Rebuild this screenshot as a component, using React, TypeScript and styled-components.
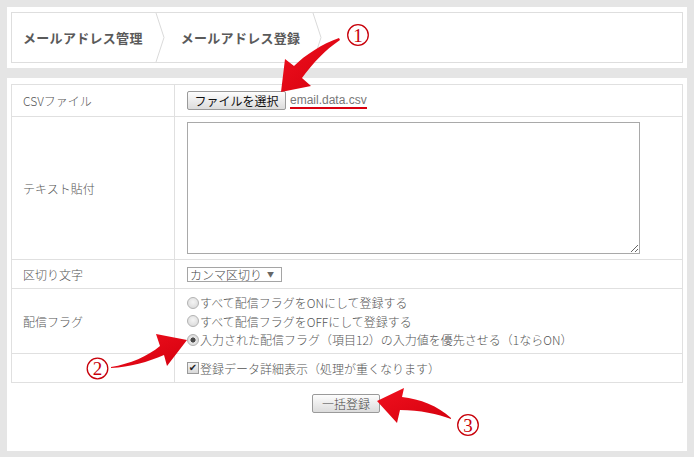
import React from 'react';
import styled, { createGlobalStyle } from 'styled-components';

const Global = createGlobalStyle`
  html, body { margin: 0; padding: 0; background: #e5e5e5; }
  body { font-family: "Noto Sans CJK JP", "Liberation Sans", sans-serif; }
  * { box-sizing: border-box; }
`;

const Page = styled.div`
  position: relative;
  width: 694px;
  height: 457px;
  padding: 7px 7px 0 7px;
  display: flex;
  flex-direction: column;
  gap: 10px;
  overflow: hidden;
`;

const HeaderPanel = styled.div`
  background: #fff;
  padding: 5px 4px;
`;

const Breadcrumb = styled.nav`
  display: flex;
  height: 51px;
  border: 1px solid #dedede;
`;

const Crumb = styled.div<{ $first?: boolean }>`
  display: flex;
  align-items: center;
  padding: 0 12px 0 ${(p) => (p.$first ? '11px' : '16px')};
  font-size: 13px;
  font-weight: 700;
  letter-spacing: 0.3px;
  color: #5a5a5a;
`;

const Chevron = styled.svg`
  flex: none;
  display: block;
`;

const MainPanel = styled.div`
  background: #fff;
  padding: 6px 4px 38px 4px;
  display: flex;
  flex-direction: column;
  gap: 11px;
`;

const Table = styled.table`
  width: 100%;
  border-collapse: collapse;
  border: 1px solid #e0e0e0;
`;

const LabelCell = styled.td<{ $h: number }>`
  width: 163px;
  height: ${(p) => p.$h}px;
  padding: 0 11px;
  border: 1px solid #e0e0e0;
  font-size: 12px;
  font-weight: 300;
  color: #555;
  vertical-align: middle;
`;

const ValueCell = styled.td<{ $top?: boolean }>`
  padding: ${(p) => (p.$top ? '5px 12px 4px' : '0 12px')};
  border: 1px solid #e0e0e0;
  font-size: 12px;
  font-weight: 300;
  color: #555;
  vertical-align: ${(p) => (p.$top ? 'top' : 'middle')};
`;

const InlineRow = styled.div`
  display: flex;
  align-items: center;
  gap: 4px;
`;

const GrayButton = styled.button<{ $w: number; $dark?: boolean }>`
  width: ${(p) => p.$w}px;
  height: 19px;
  padding: 0;
  border: 1px solid #9a9a9a;
  border-radius: 2px;
  background: linear-gradient(#fdfdfd, #dcdcdc);
  font-family: "Noto Sans CJK JP", sans-serif;
  font-size: 12px;
  font-weight: ${(p) => (p.$dark ? 400 : 300)};
  line-height: 17px;
  color: ${(p) => (p.$dark ? '#111' : '#444')};
`;

const FileName = styled.span`
  font-family: "Liberation Sans", Arial, sans-serif;
  font-size: 12px;
  color: #777;
  line-height: 13px;
  padding-top: 2px;
  border-bottom: 2px solid #d9000f;
`;

const TextArea = styled.textarea`
  display: block;
  width: 453px;
  height: 132px;
  border: 1px solid #a9a9a9;
  margin: 0;
  resize: both;
`;

const SelectBox = styled.label`
  display: inline-flex;
  align-items: center;
  width: 95px;
  height: 15px;
  border: 1px solid #a5a5a5;
  background: #fff;
  overflow: hidden;
`;

const Select = styled.select`
  appearance: none;
  -webkit-appearance: none;
  flex: 1;
  min-width: 0;
  border: 0;
  margin: 0;
  padding: 0 0 0 2px;
  background: transparent;
  font-family: "Noto Sans CJK JP", sans-serif;
  font-size: 12px;
  font-weight: 300;
  line-height: 13px;
  height: 13px;
  color: #444;
  outline: none;
`;

const Caret = styled.span`
  font-size: 7px;
  color: #666;
  padding-right: 7px;
`;

const OptionList = styled.div`
  display: flex;
  flex-direction: column;
`;

const OptionLine = styled.label`
  display: flex;
  align-items: center;
  height: 18.5px;
  gap: 1px;
  font-size: 12px;
  font-weight: 300;
  color: #555;
  white-space: nowrap;
`;

const Radio = styled.input`
  appearance: none;
  -webkit-appearance: none;
  width: 12px;
  height: 12px;
  margin: 0;
  border-radius: 50%;
  border: 1px solid #b3b3b3;
  background: radial-gradient(circle at 50% 40%, #f4f4f4, #d6d6d6);
  flex: none;
  &:checked {
    background: radial-gradient(circle, #4a4a4a 0 2.3px, #e6e6e6 2.8px, #d2d2d2 100%);
  }
`;

const Check = styled.input`
  appearance: none;
  -webkit-appearance: none;
  width: 12px;
  height: 12px;
  margin: 0;
  border: 1px solid #9a9a9a;
  background: linear-gradient(#f4f4f4, #d8d8d8);
  display: inline-grid;
  place-items: center;
  flex: none;
  &:checked::after {
    content: '✔';
    font-family: "DejaVu Sans", sans-serif;
    font-size: 10px;
    line-height: 10px;
    color: #222;
  }
`;

const Actions = styled.div`
  display: flex;
  justify-content: center;
  padding-right: 2px;
`;

const Overlay = styled.svg`
  position: absolute;
  left: 0;
  top: 0;
  pointer-events: none;
`;

const Chev = () => (
  <Chevron width="10" height="49" viewBox="0 0 10 49">
    <polyline points="1,0 9,24.5 1,49" fill="none" stroke="#dadada" strokeWidth="1" />
  </Chevron>
);

const Marker = ({ cx, cy, n }: { cx: number; cy: number; n: string }) => (
  <g>
    <circle cx={cx} cy={cy} r={10.3} fill="none" stroke="#c8000a" strokeWidth={1.3} />
    <text
      x={cx}
      y={cy + 6.5}
      textAnchor="middle"
      fontFamily="'Liberation Serif', serif"
      fontSize="19"
      fill="#c8000a"
    >
      {n}
    </text>
  </g>
);

export default function App() {
  return (
    <>
      <Global />
      <Page>
        <HeaderPanel>
          <Breadcrumb>
            <Crumb $first>メールアドレス管理</Crumb>
            <Chev />
            <Crumb>メールアドレス登録</Crumb>
            <Chev />
          </Breadcrumb>
        </HeaderPanel>
        <MainPanel>
          <Table>
            <tbody>
              <tr>
                <LabelCell $h={32}>CSVファイル</LabelCell>
                <ValueCell>
                  <InlineRow>
                    <GrayButton $w={99} $dark>ファイルを選択</GrayButton>
                    <FileName>email.data.csv</FileName>
                  </InlineRow>
                </ValueCell>
              </tr>
              <tr>
                <LabelCell $h={143}>テキスト貼付</LabelCell>
                <ValueCell $top>
                  <TextArea />
                </ValueCell>
              </tr>
              <tr>
                <LabelCell $h={29}>区切り文字</LabelCell>
                <ValueCell>
                  <SelectBox>
                    <Select defaultValue="comma">
                      <option value="comma">カンマ区切り</option>
                      <option value="tab">タブ区切り</option>
                    </Select>
                    <Caret>▼</Caret>
                  </SelectBox>
                </ValueCell>
              </tr>
              <tr>
                <LabelCell $h={65}>配信フラグ</LabelCell>
                <ValueCell>
                  <OptionList>
                    <OptionLine>
                      <Radio type="radio" name="flag" />
                      すべて配信フラグをONにして登録する
                    </OptionLine>
                    <OptionLine>
                      <Radio type="radio" name="flag" />
                      すべて配信フラグをOFFにして登録する
                    </OptionLine>
                    <OptionLine>
                      <Radio type="radio" name="flag" defaultChecked />
                      入力された配信フラグ（項目12）の入力値を優先させる（1ならON）
                    </OptionLine>
                  </OptionList>
                </ValueCell>
              </tr>
              <tr>
                <LabelCell $h={29}></LabelCell>
                <ValueCell>
                  <OptionLine>
                    <Check type="checkbox" defaultChecked />
                    登録データ詳細表示（処理が重くなります）
                  </OptionLine>
                </ValueCell>
              </tr>
            </tbody>
          </Table>
          <Actions>
            <GrayButton $w={68}>一括登録</GrayButton>
          </Actions>
        </MainPanel>
        <Overlay width="694" height="457" viewBox="0 0 694 457">
          <defs>
            <linearGradient id="rg" x1="0" y1="0" x2="1" y2="1">
              <stop offset="0" stopColor="#f0101e" />
              <stop offset="1" stopColor="#d4000e" />
            </linearGradient>
          </defs>
          <path
            d="M 339 38 C 322 44 305 55 294 66 L 285 59 L 281 92 L 311 86 L 302 78 C 313 63 325 50 340 40 Z"
            fill="url(#rg)"
          />
          <path
            d="M 111 367 C 130 364 148 356 160 346 L 156 334 L 187 340 L 167 366 L 164 355 C 148 362 130 367 111 368 Z"
            fill="url(#rg)"
          />
          <path
            d="M 451 418 C 438 406 420 399 402 397 L 404 388 L 377 401 L 397 423 L 400 410 C 420 410 438 414 451 419 Z"
            fill="url(#rg)"
          />
          <Marker cx={358} cy={35} n="1" />
          <Marker cx={97.5} cy={368.5} n="2" />
          <Marker cx={468} cy={425} n="3" />
        </Overlay>
      </Page>
    </>
  );
}
